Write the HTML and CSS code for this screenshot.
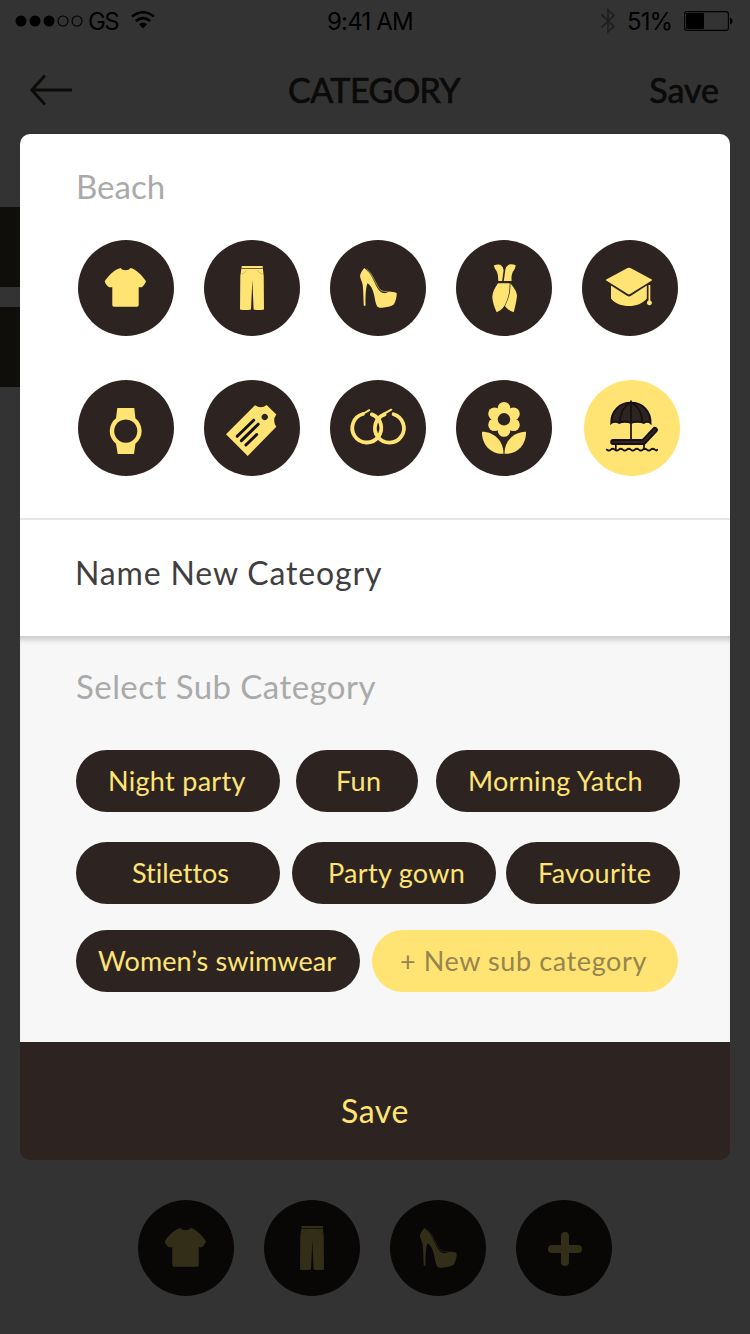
FILE: index.html
```html
<!DOCTYPE html>
<html lang="en">
  <head>
    <meta charset="UTF-8" />
    <title>Category</title>
    <link rel="stylesheet" href="styles.css">
  </head>
  <body>
    <!-- Icons -->
    <svg class="sprite" width="0" height="0">
      <symbol id="shirt" viewBox="0 0 96 96">
        <path d="M42.7 28C44 31 51 31 52.3 28C57.5 29 64 35 68 41.3C67 44 65.5 46 63.7 47.3H60.7V65Q60.7 66.7 59 66.7H36Q34.3 66.7 34.3 65V47.3H31.3C29 46 27.5 44 26.7 41.3C30 36 37 29 42.7 28Z" />
      </symbol>
      <symbol id="pants" viewBox="0 0 96 96">
        <path d="M37.8 26H58.6L59.7 36L60 69.4Q55 70.6 49.6 69.4L48.4 40L47 69.4Q41 70.6 36 69.4L36.3 36Z" />
        <path class="detail" d="M37.6 28.5H58.8" />
        <path class="detail thin" d="M37 34Q41 34 42.5 30M59 34Q55 34 53.5 30" />
      </symbol>
      <symbol id="shoe" viewBox="0 0 96 96">
        <path d="M34.3 28C32.5 30 30.3 33 30 36C30.2 39 32 41 32.6 44.5C33.4 51 33.5 60 33.8 65.8H35.6C35.4 58 35.6 48 37.4 43.3C40.5 44.5 43 50 44 54.5C45 59 45.4 63 46.7 65.5C47.8 67.8 49.5 67.8 52 67.7C56 67.5 61.5 66.6 64 64.3C65.5 61 67 57 66.7 53.3C66.4 52.6 65 52.3 63 52.1L58.5 51.5C56.5 53.5 53 53.8 50.5 51.8C46 48 43.5 38 39 32.5Z" />
        <path class="line" d="M36.5 29C42 33 45 42 48.5 47.5C50.5 51 53 51.8 57.5 51.4" />
      </symbol>
      <symbol id="dress" viewBox="0 0 96 96">
        <path d="M37.8 25.6Q41 24 44.3 24.8Q47.2 26.5 47.6 30L46.2 41H42.3C42.3 37 41.8 32 39.9 30.2Q38.5 28.5 37.8 25.6Z" />
        <path d="M59.7 25.3Q56 23.6 53 24.5Q50 26 49.3 30L47.8 41H55.7C55 37 55.8 32.5 58 30.2Q59.3 28.5 59.7 25.3Z" />
        <path d="M42 43.2C39 47.5 36.5 52 36.3 56.7C36.5 62 38.5 67.5 40.7 72.3C44 70.8 46.4 69 48.3 66C51.7 60 54 52 53.6 43.2Z" />
        <path d="M54.4 43.2C57.5 47 60.7 51 61 55.7C60.6 61 59 67 57.7 72.3C53.6 70.7 51 69 49 66C53 58.5 54.7 51 54.4 43.2Z" />
      </symbol>
      <symbol id="cap" viewBox="0 0 96 96">
        <path d="M45.5 28.1Q47 27.4 48.5 28.1L69.8 39.6Q70.3 40 69.8 40.4L48.5 53.8Q47 54.8 45.5 53.8L24.2 40.4Q23.7 40 24.2 39.6Z" />
        <path d="M29 45.4L45 55.8Q47 57 49 55.8L64.8 45.4V58.5C61 63.5 54 66 47 66C40 66 32.5 63.5 29 58.5Z" />
        <path d="M66.5 45H68.3V60.4A2.5 2.5 0 1 1 66.5 60.4Z" />
      </symbol>
      <symbol id="watch" viewBox="0 0 96 96">
        <path fill-rule="evenodd" d="M39.3 28H56.3L57.4 38.3A16 16 0 0 1 57.4 63.7L56 74H39.7L38 63.7A16 16 0 0 1 38 38.3ZM47.7 39.5A11.6 11.6 0 1 0 47.8 39.5Z" />
      </symbol>
      <symbol id="tag" viewBox="0 0 96 96">
        <path fill-rule="evenodd" d="M51 25.2Q57 29.5 62.7 25L72.3 34.5Q68 40.5 72.3 46.7L43.7 76L22 54.2ZM60.7 33.8A3.2 3.2 0 1 0 60.8 33.8Z" />
        <path class="stripe" d="M49.7 40.2L33.2 56.3M54.2 44.2L37.4 60.6M52.7 54.5L41.9 65" />
      </symbol>
      <symbol id="hoops" viewBox="0 0 96 96">
        <g class="ring">
          <path d="M33 34A14.5 14.5 0 1 0 41.8 34.4" />
          <path d="M54.6 34.4A14.5 14.5 0 1 0 63.6 34.2" />
        </g>
        <path class="pin" d="M34.5 33L39.3 30.2M53.5 34L61.3 29.7" />
      </symbol>
      <symbol id="flower" viewBox="0 0 96 96">
        <circle cx="48" cy="28.3" r="6.3" />
        <circle cx="57.5" cy="33.8" r="6.3" />
        <circle cx="57.5" cy="44.8" r="6.3" />
        <circle cx="48" cy="50.5" r="6.3" />
        <circle cx="38.5" cy="44.8" r="6.3" />
        <circle cx="38.5" cy="33.8" r="6.3" />
        <circle cx="48" cy="39.3" r="10" />
        <circle class="hole" cx="48" cy="39.3" r="6.2" />
        <path d="M26 51.7C37 51.5 47.6 60 47.5 73.8C35.5 74.5 25.5 65 26 51.7Z" />
        <path d="M70 51.7C59 51.5 48.4 60 48.5 73.8C60.5 74.5 70.5 65 70 51.7Z" />
      </symbol>
      <symbol id="beach" viewBox="0 0 96 96">
        <path class="canopy" d="M27.2 43.2C27 31 35.5 22.7 47 22.7C58.5 22.7 66.8 31 66.6 43.2C65 41.6 61.5 41.4 59.8 43C56.5 41.3 50 41.3 47 43C44 41.3 38 41.3 35.2 43C33 41.4 29 41.6 27.2 43.2Z" />
        <path class="rib" d="M47 20.5V59M36 42.5C35.7 34 39.5 26 47 22.5C54.5 26 58.5 34 58.3 42.5" />
        <path class="lounger" d="M29.2 62H59.5L70.8 50" />
        <path class="padding" d="M29.2 62H59.5L70.8 50" />
        <path class="rib" d="M31.8 64V70M60 64V70" />
        <path class="wave" d="M22.8 69.6q2 1.8 4 0t4 0t4 0t4 0t4 0t4 0t4 0t4 0t4 0t4 0t4 0t4 0t2.4 0" />
      </symbol>
      <symbol id="plus" viewBox="0 0 96 96">
        <path class="cross" d="M49 36V62M36 49H62" />
      </symbol>
    </svg>

    <div class="screen">
      <div class="status">
        <div class="status-left">
          <svg width="68" height="14" viewBox="0 0 68 14">
            <circle cx="6" cy="7" r="5.5" />
            <circle cx="20" cy="7" r="5.5" />
            <circle cx="34" cy="7" r="5.5" />
            <circle class="empty" cx="48" cy="7" r="5" />
            <circle class="empty" cx="62" cy="7" r="5" />
          </svg>
          <span class="carrier">GS</span>
          <svg class="wifi" width="24" height="18" viewBox="0 0 24 18">
            <path class="arc" d="M1 5.6Q12 -3.2 23 5.6M4.8 10.1Q12 4.2 19.2 10.1" />
            <path d="M8 13.2Q12 10 16 13.2L12 17.6Z" />
          </svg>
        </div>
        <span class="time">9:41 AM</span>
        <div class="status-right">
          <svg width="16" height="26" viewBox="0 0 16 26">
            <path class="bluetooth" d="M1.5 6.5L14 18.5L8 24V2L14 7.5L1.5 19.5" />
          </svg>
          <span class="percent">51%</span>
          <svg width="49" height="20" viewBox="0 0 49 20">
            <rect class="empty" x=".6" y=".6" width="43.8" height="18.8" rx="2.5" />
            <rect x="2" y="2" width="18" height="16" rx="1" />
            <path d="M46 6.5Q48.8 7.5 48.8 10T46 13.5Z" />
          </svg>
        </div>
      </div>

      <header>
        <svg class="back" width="44" height="32" viewBox="0 0 44 32">
          <path d="M15 1.5L1.8 16L15 30.5M2 16H42" />
        </svg>
        <h1>CATEGORY</h1>
        <a class="header-save">Save</a>
      </header>

      <div class="list">
        <div class="bar"></div>
        <div class="bar"></div>
      </div>

      <div class="dock">
        <div class="icon"><svg><use href="#shirt" /></svg></div>
        <div class="icon"><svg><use href="#pants" /></svg></div>
        <div class="icon"><svg><use href="#shoe" /></svg></div>
        <div class="icon"><svg><use href="#plus" /></svg></div>
      </div>
    </div>

    <div class="overlay">
      <div class="modal">
        <section class="pick">
          <h2 class="beach-title">Beach</h2>
          <div class="icons">
            <div class="icon"><svg><use href="#shirt" /></svg></div>
            <div class="icon"><svg><use href="#pants" /></svg></div>
            <div class="icon"><svg><use href="#shoe" /></svg></div>
            <div class="icon"><svg><use href="#dress" /></svg></div>
            <div class="icon"><svg><use href="#cap" /></svg></div>
          </div>
          <div class="icons">
            <div class="icon"><svg><use href="#watch" /></svg></div>
            <div class="icon"><svg><use href="#tag" /></svg></div>
            <div class="icon"><svg><use href="#hoops" /></svg></div>
            <div class="icon"><svg><use href="#flower" /></svg></div>
            <div class="icon active"><svg><use href="#beach" /></svg></div>
          </div>
        </section>

        <section class="name">Name New Cateogry</section>

        <section class="sub">
          <h2 class="sub-title">Select Sub Category</h2>
          <div class="chips">
            <span class="chip night">Night party</span>
            <span class="chip fun">Fun</span>
            <span class="chip yatch">Morning Yatch</span>
          </div>
          <div class="chips">
            <span class="chip stilettos">Stilettos</span>
            <span class="chip gown">Party gown</span>
            <span class="chip favourite">Favourite</span>
          </div>
          <div class="chips">
            <span class="chip swimwear">Women’s swimwear</span>
            <span class="chip new">+ New sub category</span>
          </div>
        </section>

        <div class="save">Save</div>
      </div>
    </div>
  </body>
</html>
```
FILE: styles.css
```css
:root {
  --brown: #2d2422;
  --yellow: #ffe474;
}

* {
  box-sizing: border-box;
  margin: 0;
  padding: 0;
}

body {
  position: relative;
  width: 750px;
  height: 1334px;
  overflow: hidden;
  background: #fff;
  font-family: Lato, "Open Sans", sans-serif;
  font-variant-ligatures: none;
}

h1,
h2 {
  font-weight: 400;
}

.sprite {
  position: absolute;
}

.screen {
  height: 1334px;
  display: flex;
  flex-direction: column;
}

/* Status bar */
.status {
  height: 42px;
  padding: 0 17px 0 15px;
  display: flex;
  justify-content: space-between;
  align-items: center;
  font-family: Inter, sans-serif;
  font-size: 24px;
  color: #000;
}

.status-left,
.status-right {
  flex: 1;
  display: flex;
  align-items: center;
}

.status-right {
  justify-content: flex-end;
}

.carrier {
  margin-left: 5px;
  width: 31px;
  letter-spacing: -1.6px;
}

.wifi {
  margin: -2px 0 0 12px;
}

.time {
  margin: 0 8px 0 0;
  letter-spacing: -0.8px;
}

.percent {
  margin: 0 12px 0 11px;
  letter-spacing: -1px;
}

.empty {
  fill: none;
  stroke: #000;
  stroke-width: 1.1;
}

.arc {
  fill: none;
  stroke: #000;
  stroke-width: 2.6;
}

.bluetooth {
  fill: none;
  stroke: #a0a0a0;
  stroke-width: 1.8;
}

/* Header */
header {
  height: 92px;
  padding: 3px 31px 0 30px;
  display: flex;
  justify-content: space-between;
  align-items: center;
  color: #3a322f;
}

header h1 {
  font-size: 34px;
  letter-spacing: -0.5px;
  -webkit-text-stroke: 0.7px #3a322f;
}

.back {
  fill: none;
  stroke: #3c3a32;
  stroke-width: 3;
  margin-right: 25px;
}

.header-save {
  font-size: 34px;
  -webkit-text-stroke: 0.7px #3a322f;
}

.list {
  flex: 1;
  padding-top: 73px;
}

.bar {
  height: 80px;
  margin-bottom: 20px;
  width: 60px;
  background: #4b4638;
}

.dock {
  height: 134px;
  display: flex;
  justify-content: center;
  gap: 30px;
}

/* Round icons */
.icon {
  width: 96px;
  height: 96px;
  border-radius: 50%;
  background: var(--brown);
}

.icon svg {
  display: block;
  width: 96px;
  height: 96px;
  fill: var(--yellow);
}

.icon.active {
  margin-left: 2px;
  background: var(--yellow);
}

.detail {
  fill: none;
  stroke: var(--brown);
  stroke-width: 0.7;
}

.thin {
  stroke-width: 0.2;
}

.line {
  fill: none;
  stroke: var(--yellow);
  stroke-width: 0.6;
}

.stripe {
  stroke: #15110f;
  stroke-width: 3;
  stroke-linecap: round;
}

.ring {
  fill: none;
  stroke: var(--yellow);
  stroke-width: 3.8;
  stroke-linecap: round;
}

.pin {
  stroke: var(--yellow);
  stroke-width: 2;
  stroke-linecap: round;
}

.hole {
  fill: var(--brown);
}

.canopy {
  fill: var(--brown);
  stroke: #14100f;
  stroke-width: 1.8;
}

.rib {
  fill: none;
  stroke: #14100f;
  stroke-width: 1.7;
}

.lounger {
  fill: none;
  stroke: #14100f;
  stroke-width: 6;
  stroke-linecap: round;
  stroke-linejoin: round;
}

.padding {
  fill: none;
  stroke: var(--brown);
  stroke-width: 2.2;
  stroke-linecap: round;
}

.wave {
  fill: none;
  stroke: #14100f;
  stroke-width: 1.9;
  stroke-linecap: round;
}

.cross {
  stroke: var(--yellow);
  stroke-width: 8;
  stroke-linecap: round;
}

/* Modal */
.overlay {
  position: absolute;
  top: 0;
  left: 0;
  width: 100%;
  height: 100%;
  padding: 134px 20px 0;
  background: rgba(0, 0, 0, 0.8);
}

.modal {
  height: 1026px;
}

.modal h2 {
  font-size: 33px;
  line-height: 40px;
  color: #aaa;
}

.pick {
  height: 386px;
  padding: 32px 50px 0 58px;
  border-radius: 10px 10px 0 0;
  border-bottom: 2px solid #e6e6e6;
  background: #fff;
}

.pick h2 {
  margin: 0 0 34px -2px;
}

.icons {
  display: flex;
  gap: 30px;
  margin-bottom: 44px;
}

.name {
  height: 116px;
  padding: 33px 0 0 55px;
  font-size: 32px;
  line-height: 40px;
  letter-spacing: 0.85px;
  background: #fff;
  color: #3f3f41;
}

.sub {
  height: 406px;
  padding: 30px 50px 0 56px;
  background: #f7f7f7;
  box-shadow: inset 0 7px 6px -4px rgba(0, 0, 0, 0.22);
}

.sub h2 {
  margin-bottom: 44px;
  letter-spacing: 0.45px;
}

.chips {
  display: flex;
  margin-bottom: 30px;
}

.chips:nth-of-type(2) {
  margin-bottom: 26px;
}

.chip {
  height: 62px;
  border-radius: 31px;
  background: var(--brown);
  color: var(--yellow);
  font-size: 27px;
  line-height: 61px;
  letter-spacing: 0.3px;
  white-space: nowrap;
}

.night {
  width: 204px;
  padding-left: 32px;
}

.fun {
  width: 122px;
  margin-left: 16px;
  padding-left: 40px;
}

.yatch {
  width: 244px;
  margin-left: 18px;
  padding-left: 32px;
}

.stilettos {
  width: 204px;
  padding-left: 56px;
  letter-spacing: 0;
}

.gown {
  width: 204px;
  margin-left: 12px;
  padding-left: 36px;
}

.favourite {
  width: 174px;
  margin-left: 10px;
  padding-left: 32px;
}

.swimwear {
  width: 284px;
  padding-left: 22px;
  letter-spacing: 0.1px;
}

.new {
  width: 306px;
  margin-left: 12px;
  padding-left: 28px;
  letter-spacing: 0.6px;
  background: var(--yellow);
  color: #968550;
}

.save {
  height: 118px;
  padding-top: 20px;
  border-radius: 0 0 10px 10px;
  text-align: center;
  font-size: 32px;
  line-height: 98px;
  letter-spacing: 0.6px;
  background: var(--brown);
  color: var(--yellow);
}
```
